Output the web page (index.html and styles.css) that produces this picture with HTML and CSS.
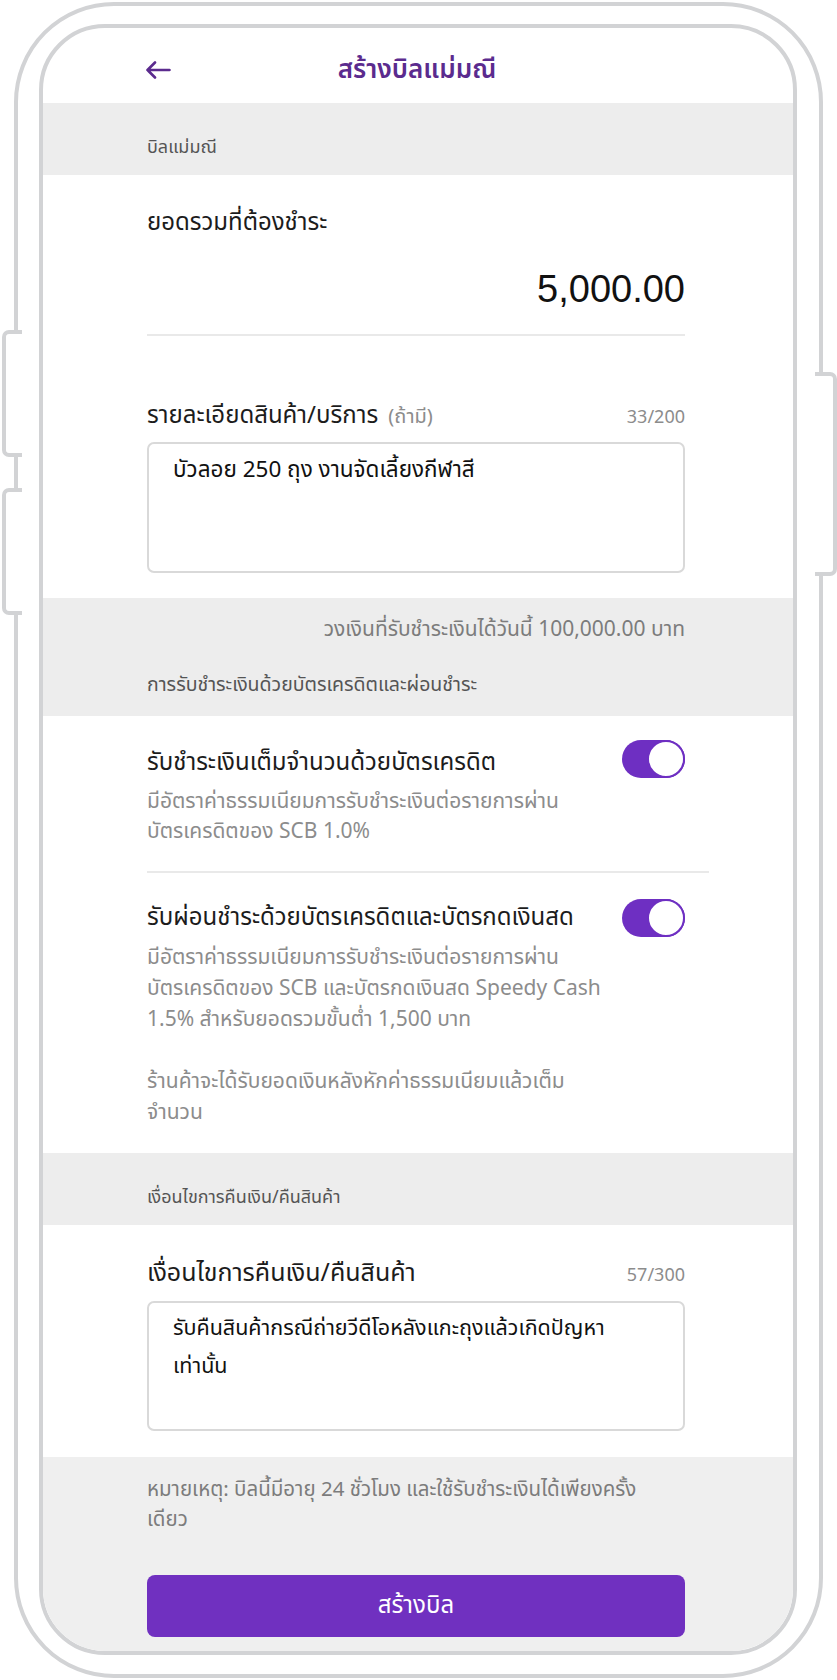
FILE: index.html
```html
<!DOCTYPE html>
<html lang="th">
<head>
<meta charset="utf-8">
<title>สร้างบิลแม่มณี</title>
<link rel="stylesheet" href="styles.css">
</head>
<body>
<div class="phone">
  <span class="side-btn side-left side-left-1"></span>
  <span class="side-btn side-left side-left-2"></span>
  <span class="side-btn side-right"></span>
  <div class="screen">
    <header class="topbar">
      <svg class="back" width="26" height="18" viewBox="0 0 26 18" aria-hidden="true">
        <path d="M24.5 9H2.5M10 1.5L2.5 9L10 16.5" fill="none" stroke="#5b2b8e" stroke-width="2.6" stroke-linecap="round" stroke-linejoin="round"/>
      </svg>
      <h1 class="title">สร้างบิลแม่มณี</h1>
      <span></span>
    </header>

    <div class="band band-top">บิลแม่มณี</div>

    <section class="block block-amount">
      <div class="label">ยอดรวมที่ต้องชำระ</div>
      <div class="amount">5,000.00</div>
      <hr class="rule">
      <div class="field-head">
        <div class="label">รายละเอียดสินค้า/บริการ <span class="optional">(ถ้ามี)</span></div>
        <div class="count">33/200</div>
      </div>
      <div class="textbox textbox-wide">บัวลอย 250 ถุง งานจัดเลี้ยงกีฬาสี</div>
    </section>

    <div class="band band-limit">
      <div class="limit">วงเงินที่รับชำระเงินได้วันนี้ 100,000.00 บาท</div>
      <div class="band-heading">การรับชำระเงินด้วยบัตรเครดิตและผ่อนชำระ</div>
    </div>

    <section class="block block-options">
      <div class="option">
        <div class="option-text">
          <div class="option-title">รับชำระเงินเต็มจำนวนด้วยบัตรเครดิต</div>
          <p class="desc">มีอัตราค่าธรรมเนียมการรับชำระเงินต่อรายการผ่าน<br>บัตรเครดิตของ SCB 1.0%</p>
        </div>
        <span class="toggle"><span class="knob"></span></span>
      </div>
      <hr class="rule rule-wide">
      <div class="option option-2">
        <div class="option-text">
          <div class="option-title">รับผ่อนชำระด้วยบัตรเครดิตและบัตรกดเงินสด</div>
          <p class="desc desc-2">มีอัตราค่าธรรมเนียมการรับชำระเงินต่อรายการผ่าน<br>บัตรเครดิตของ SCB และบัตรกดเงินสด Speedy Cash<br>1.5% สำหรับยอดรวมขั้นต่ำ 1,500 บาท</p>
          <p class="desc desc-2 desc-gap">ร้านค้าจะได้รับยอดเงินหลังหักค่าธรรมเนียมแล้วเต็ม<br>จำนวน</p>
        </div>
        <span class="toggle"><span class="knob"></span></span>
      </div>
    </section>

    <div class="band band-top">เงื่อนไขการคืนเงิน/คืนสินค้า</div>

    <section class="block block-refund">
      <div class="field-head">
        <div class="label label-refund">เงื่อนไขการคืนเงิน/คืนสินค้า</div>
        <div class="count">57/300</div>
      </div>
      <div class="textbox">รับคืนสินค้ากรณีถ่ายวีดีโอหลังแกะถุงแล้วเกิดปัญหา<br>เท่านั้น</div>
    </section>

    <footer class="footer">
      <p class="note">หมายเหตุ: บิลนี้มีอายุ 24 ชั่วโมง และใช้รับชำระเงินได้เพียงครั้ง<br>เดียว</p>
      <button class="cta" type="button">สร้างบิล</button>
    </footer>
  </div>
</div>
</body>
</html>
```

FILE: styles.css
```css
* { box-sizing: border-box; }

html, body {
  margin: 0;
  padding: 0;
  background: #ffffff;
}

body {
  font-family: "Noto Sans Thai", "Noto Sans", "DejaVu Sans", sans-serif;
  color: #1c1c1c;
}

.phone {
  position: relative;
  margin: 2px 0 0 14px;
  width: 809px;
  height: 1676px;
  border: 4px solid #d2d3d5;
  border-radius: 100px;
  padding: 18px 22px 19px 21px;
}

.side-btn {
  position: absolute;
  background: #ffffff;
  border: 4px solid #d2d3d5;
}

.side-left {
  left: -16px;
  width: 20px;
  border-right: none;
  border-radius: 7px 0 0 7px;
}

.side-left-1 { top: 324px; height: 127px; }
.side-left-2 { top: 482px; height: 127px; }

.side-right {
  right: -18px;
  top: 366px;
  width: 22px;
  height: 204px;
  border-left: none;
  border-radius: 0 7px 7px 0;
}

.screen {
  height: 100%;
  border: 4px solid #d2d3d5;
  border-radius: 66px;
  overflow: hidden;
  background: #ffffff;
  display: flex;
  flex-direction: column;
}

.topbar {
  height: 75px;
  flex: none;
  display: grid;
  grid-template-columns: 1fr auto 1fr;
  align-items: center;
  padding: 9px 104px 0 102px;
}

.back { display: block; }

.title {
  margin: 0;
  font-size: 26px;
  font-weight: 600;
  color: #5b2b8e;
  line-height: 32px;
  white-space: nowrap;
}

.band {
  background: #ededed;
  padding: 0 108px 0 104px;
  flex: none;
}

.band-top {
  height: 72px;
  padding-top: 34px;
  font-size: 18px;
  line-height: 22px;
  color: #555555;
}

.band-limit {
  height: 118px;
  padding-top: 20px;
}

.limit {
  text-align: right;
  font-size: 21px;
  line-height: 24px;
  color: #7c7c7c;
  white-space: nowrap;
}

.band-heading {
  margin-top: 32px;
  font-size: 19.5px;
  line-height: 22px;
  color: #555555;
  white-space: nowrap;
}

.block {
  padding: 0 108px 0 104px;
  flex: none;
}

.block-amount {
  padding-top: 34px;
  height: 423px;
}

.label {
  font-size: 24px;
  line-height: 28px;
  color: #1c1c1c;
  white-space: nowrap;
}

.label-refund { font-size: 25px; }

.amount {
  margin-top: 31px;
  text-align: right;
  font-family: "Liberation Sans", Arial, sans-serif;
  font-size: 38px;
  line-height: 42px;
  color: #111111;
}

.rule {
  margin: 24px 0 0;
  border: none;
  height: 2px;
  background: #e9e9e9;
}

.block-amount .field-head { margin-top: 66px; }

.field-head {
  display: flex;
  justify-content: space-between;
  align-items: baseline;
}

.optional {
  margin-left: 4px;
  font-size: 20px;
  color: #8c8c8c;
}

.count {
  font-size: 18px;
  color: #8c8c8c;
}

.textbox {
  margin-top: 12px;
  height: 130px;
  border: 2px solid #d9d9d9;
  border-radius: 7px;
  padding: 7px 24px;
  font-size: 21.5px;
  line-height: 38px;
  color: #111111;
  white-space: nowrap;
}

.textbox-wide {
  margin-top: 11px;
  height: 131px;
  font-size: 22.5px;
}

.block-options {
  padding-top: 24px;
  height: 437px;
  padding-right: 84px;
}

.option {
  display: flex;
  justify-content: space-between;
  align-items: flex-start;
  padding-right: 24px;
}

.option-title {
  font-size: 24px;
  line-height: 30px;
  color: #1c1c1c;
  margin-top: 8px;
  white-space: nowrap;
}

.option-2 .option-title { margin-top: 4px; }

.desc {
  margin: 9px 0 0;
  font-size: 21px;
  line-height: 30px;
  color: #8c8c8c;
  white-space: nowrap;
}

.desc-2 { line-height: 31px; }
.desc-gap { margin-top: 31px; }

.toggle {
  position: relative;
  flex: none;
  width: 63px;
  height: 38px;
  border-radius: 19px;
  background: #6e2fc2;
}

.knob {
  position: absolute;
  right: 0;
  top: 0;
  width: 38px;
  height: 38px;
  border-radius: 50%;
  background: #ffffff;
  border: 2px solid #6e2fc2;
}

.rule-wide { margin-top: 24px; }

.option-2 { margin-top: 26px; }

.block-refund {
  padding-top: 34px;
  height: 232px;
}

.footer {
  flex: 1;
  background: #efefef;
  padding: 18px 108px 0 104px;
}

.note {
  margin: 0;
  font-size: 20.5px;
  line-height: 30px;
  color: #7c7c7c;
  white-space: nowrap;
}

.cta {
  display: block;
  width: 100%;
  height: 62px;
  margin-top: 40px;
  border: none;
  border-radius: 8px;
  background: #7030c0;
  color: #ffffff;
  font-family: inherit;
  font-size: 24px;
}
```
